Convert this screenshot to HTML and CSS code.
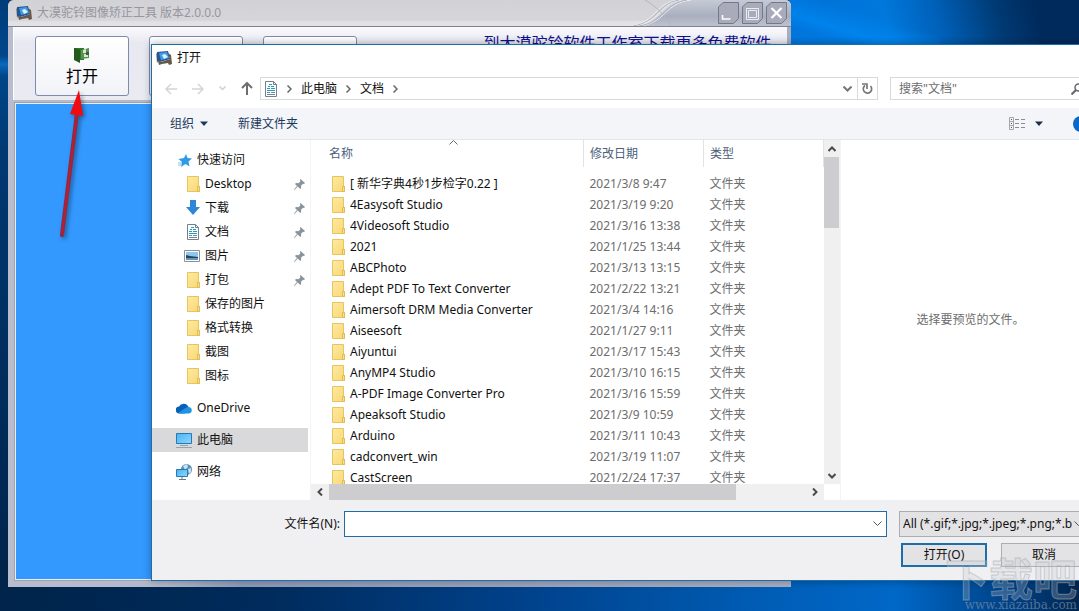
FILE: index.html
```html
<!DOCTYPE html>
<html lang="zh-CN">
<head>
<meta charset="utf-8">
<title>大漠驼铃图像矫正工具</title>
<link rel="stylesheet" href="styles.css">
</head>
<body>
<svg class="sprite" aria-hidden="true">
  <defs>
    <linearGradient id="gold" x1="0" y1="0" x2="1" y2="1"><stop offset="0" stop-color="#ffeaa0"/><stop offset="1" stop-color="#f8d775"/></linearGradient>
    <linearGradient id="screen" x1="0" y1="0" x2="1" y2="1"><stop offset="0" stop-color="#48b4f4"/><stop offset="1" stop-color="#8ed6ff"/></linearGradient>
    <symbol id="folder" viewBox="0 0 14 16"><path d="M1.500.5h11v10h1v5h-12z" fill="url(#gold)" stroke="#e6c561"/><path d="M11.500 15.500v-5h2v5z" fill="#fbe08a" stroke="#dfbb52"/></symbol>
    <symbol id="doc" viewBox="0 0 14 16"><path d="M1.500.5h8l3 3v12h-11z" fill="#fff" stroke="#73818b"/><path d="M9.500.5v3h3" fill="none" stroke="#73818b"/><path d="M5 3.500h3M4 5.500h2M7 5.500h3M3 7.500h3M7 7.500h4M3 9.500h8" stroke="#1f9cc0"/><path d="M3 11.500h3M7 11.500h4M3 13.500h8" stroke="#6f8996"/></symbol>
    <symbol id="app" viewBox="0 0 16 14"><path d="M0 3l2-2v10l-1 1z" fill="#7f8c9c"/><path d="M1 1l11-1 2 8-10 3-3-1z" fill="#27568c"/><path d="M3 2l8-1 2 6-8 2z" fill="#3f9ae8"/><path d="M6 4l3-1 3 3-4 2z" fill="#d9f2ff"/><path d="M2 10l3 1 9-3-2-6 3 2 1 9-3 1-1-2-6 1-3 1z" fill="#66594b"/></symbol>
    <symbol id="pin" viewBox="0 0 11 11"><path d="M6.500 0l4.500 4-1 1-1-.3-2 2 .2 2.300-1 1L3.700 7.500.5 11l-.5-.5 3-3.500L1 5l1-1 2.500.2 2-2L5.800 1z" fill="#8a939b"/></symbol>
  </defs>
</svg>
<main class="desktop">
  <section class="app-window">
    <header class="app-title">
      <svg class="app-icon" width="16" height="14"><use href="#app"/></svg>
      <h1 class="app-name">大漠驼铃图像矫正工具 版本2.0.0.0</h1>
      <svg class="swirl" width="170" height="27" viewBox="0 0 170 27" aria-hidden="true">
        <defs><linearGradient id="steel" x1="0" y1="0" x2="0" y2="1"><stop offset="0" stop-color="#c6cad5"/><stop offset=".6" stop-color="#a9afbf"/><stop offset="1" stop-color="#c0c4d0"/></linearGradient></defs>
        <path d="M5 27C32 22 32 4 54 0H170V27z" fill="url(#steel)"/>
        <path d="M4 26C30 22 28 4 50 0M0 26C25 22 24 4 46 0M11 26C37 20 34 3 60 0" fill="none" stroke="#eff0f4"/>
        <path d="M2 26C27 22 26 4 48 0M8 26C34 22 32 4 56 0" fill="none" stroke="#b2b6c2"/>
        <path d="M14 0C25 6 35 16 40 27" fill="none" stroke="#b2b6c4"/>
      </svg>
      <div class="app-controls">
        <button class="app-control" aria-label="最小化"><svg width="21" height="22" viewBox="0 0 21 22"><path d="M5 .5h15.500v16l-5 5H.5V5z" fill="#a9abba" stroke="#73788a"/><path d="M4.500 13v4h8" fill="none" stroke="#fff" stroke-width="1.500"/></svg></button>
        <button class="app-control" aria-label="最大化"><svg width="21" height="22" viewBox="0 0 21 22"><path d="M5 .5h15.500v16l-5 5H.5V5z" fill="#a9abba" stroke="#73788a"/><path d="M4.500 6.500h12v11h-12zM6.500 8.500h8v7h-8z" fill="none" stroke="#eceef5"/></svg></button>
        <button class="app-control" aria-label="关闭"><svg width="21" height="22" viewBox="0 0 21 22"><path d="M5 .5h15.500v16l-5 5H.5V5z" fill="#a9abba" stroke="#73788a"/><path d="M5.500 6l10 10M15.500 6l-10 10" stroke="#fff" stroke-width="2.200"/></svg></button>
      </div>
    </header>
    <div class="app-toolbar">
      <button class="tool">
        <svg width="16" height="16" viewBox="0 0 16 16" aria-hidden="true"><path d="M0 1h10v12H0z" fill="#2f7a24"/><path d="M0 1l6 2v13l-6-3z" fill="#215a1b"/><path d="M7 3l8-2v10l-8 1z" fill="#5d8f55"/><path d="M9 3l3-1v4H9zM10 7h4v3h-4z" fill="#d7e6d3"/><path d="M12 5h3v3h-3z" fill="#3b5c38"/></svg>
        打开
      </button>
      <button class="tool" aria-label="工具二"></button>
      <button class="tool" aria-label="工具三"></button>
      <a class="promo" href="#">到大漠驼铃软件工作室下载更多免费软件---</a>
    </div>
    <div class="canvas"></div>
  </section>

  <section class="dialog" role="dialog" aria-labelledby="dialog-title">
    <header class="dialog-title">
      <svg width="16" height="14"><use href="#app"/></svg>
      <h2 class="dialog-name" id="dialog-title">打开</h2>
    </header>
    <div class="address-row">
      <div class="history">
        <button class="flat" aria-label="后退"><svg width="12" height="12" viewBox="0 0 12 12"><path d="M12 6H1M6 1L1 6l5 5" fill="none" stroke="#d4d4d6" stroke-width="1.500"/></svg></button>
        <button class="flat" aria-label="前进"><svg width="12" height="12" viewBox="0 0 12 12"><path d="M0 6h11M6 1l5 5-5 5" fill="none" stroke="#d4d4d6" stroke-width="1.500"/></svg></button>
        <button class="flat" aria-label="最近"><svg width="7" height="5" viewBox="0 0 7 5"><path d="M.5.5l3 3 3-3" fill="none" stroke="#cfcfd2" stroke-width="1.500"/></svg></button>
        <button class="flat" aria-label="上移"><svg width="12" height="13" viewBox="0 0 12 13"><path d="M6 13V1M1 6l5-5 5 5" fill="none" stroke="#6e6e72" stroke-width="2"/></svg></button>
      </div>
      <nav class="address" aria-label="路径">
        <svg width="14" height="16"><use href="#doc"/></svg>
        <svg class="crumb-sep" width="5" height="8" viewBox="0 0 5 8"><path d="M.5.5L4 4 .5 7.500" fill="none" stroke="#666" stroke-width="1.500"/></svg>
        <a class="crumb" href="#">此电脑</a>
        <svg class="crumb-sep" width="5" height="8" viewBox="0 0 5 8"><path d="M.5.5L4 4 .5 7.500" fill="none" stroke="#666" stroke-width="1.500"/></svg>
        <a class="crumb" href="#">文档</a>
        <svg class="crumb-sep" width="5" height="8" viewBox="0 0 5 8"><path d="M.5.5L4 4 .5 7.500" fill="none" stroke="#666" stroke-width="1.500"/></svg>
        <button class="flat address-drop" aria-label="展开路径"><svg width="9" height="6" viewBox="0 0 9 6"><path d="M.5.5l4 4 4-4" fill="none" stroke="#77777b" stroke-width="2"/></svg></button>
        <button class="flat refresh" aria-label="刷新"><svg width="11" height="12" viewBox="0 0 11 12"><path d="M3 2.500A4.200 4.200 0 1 0 8.500 3" fill="none" stroke="#77777b" stroke-width="1.700"/><path d="M0 1h5v5" fill="none" stroke="#77777b" stroke-width="1.700"/></svg></button>
      </nav>
      <label class="search">
        <input class="search-input" type="text" placeholder="搜索&quot;文档&quot;" aria-label="搜索">
        <svg width="12" height="12" viewBox="0 0 12 12"><circle cx="7.500" cy="4.500" r="3.500" fill="none" stroke="#66666a" stroke-width="1.500"/><path d="M5 7L.5 11.500" stroke="#66666a" stroke-width="2"/></svg>
      </label>
    </div>
    <div class="commands">
      <button class="flat command">组织 <svg width="8" height="5" viewBox="0 0 8 5"><path d="M0 .5h8L4 5z" fill="#1e395b"/></svg></button>
      <button class="flat command">新建文件夹</button>
      <button class="flat view" aria-label="更改视图">
        <svg width="17" height="13" viewBox="0 0 17 13"><path d="M.5.500h4v12h-4zM.5 4.500h4M.5 8.500h4" fill="none" stroke="#a4a4a8"/><path d="M2 2.500h1M2 6.500h1M2 10.500h1" stroke="#555"/><path d="M6 2.500h4M12 2.500h4M6 6.500h4M12 6.500h4M6 10.500h4M12 10.500h4" stroke="#8c8c92"/></svg>
        <svg width="8" height="5" viewBox="0 0 8 5"><path d="M0 .5h8L4 5z" fill="#1e2f4b"/></svg>
      </button>
      <button class="flat help" aria-label="帮助"></button>
    </div>
    <div class="browser">
      <nav class="places">
        <ul class="place-group">
          <li class="place"><svg width="14" height="13" viewBox="0 0 14 13"><path d="M8 0l1.500 4 4.500.5-3.500 3 1 5L7.500 10 3 13l1-5-3.500-3L6 4z" fill="#2e9ce4"/><path d="M0 9h4M0 11h3" stroke="#7cc0ef"/></svg>快速访问</li>
          <li class="place child"><svg width="14" height="16"><use href="#folder"/></svg>Desktop<svg class="pin" width="11" height="11"><use href="#pin"/></svg></li>
          <li class="place child"><svg width="14" height="16" viewBox="0 0 14 16"><path d="M4 0h6v7h4l-7 8-7-8h4z" fill="#2f86d6"/></svg>下载<svg class="pin" width="11" height="11"><use href="#pin"/></svg></li>
          <li class="place child"><svg width="14" height="16"><use href="#doc"/></svg>文档<svg class="pin" width="11" height="11"><use href="#pin"/></svg></li>
          <li class="place child"><svg class="wide" width="16" height="12" viewBox="0 0 16 12"><path d="M.5.5h15v11H.5z" fill="#fff" stroke="#87919b"/><path d="M2 2h12v8H2z" fill="#8dc7ee"/><path d="M2 5l4 1 8 1v3H2z" fill="#23455f"/><path d="M2 8h12v2H2z" fill="#6696b2"/></svg>图片<svg class="pin" width="11" height="11"><use href="#pin"/></svg></li>
          <li class="place child"><svg width="14" height="16"><use href="#folder"/></svg>打包<svg class="pin" width="11" height="11"><use href="#pin"/></svg></li>
          <li class="place child"><svg width="14" height="16"><use href="#folder"/></svg>保存的图片</li>
          <li class="place child"><svg width="14" height="16"><use href="#folder"/></svg>格式转换</li>
          <li class="place child"><svg width="14" height="16"><use href="#folder"/></svg>截图</li>
          <li class="place child"><svg width="14" height="16"><use href="#folder"/></svg>图标</li>
        </ul>
        <ul class="place-group">
          <li class="place"><svg class="wide" width="16" height="11" viewBox="0 0 16 11"><path d="M3.500 10.500a3.500 3.500 0 0 1-.5-7A5.200 5.200 0 0 1 12.500 4L9 10.500z" fill="#0a5fb8"/><path d="M2 10L9.500 5a4 4 0 0 1 3.500-1 3.300 3.300 0 0 1 0 6.500H4z" fill="#1f93e6"/></svg>OneDrive</li>
        </ul>
        <ul class="place-group">
          <li class="place selected"><svg class="wide" width="16" height="15" viewBox="0 0 16 15"><path d="M.5.500h15v10H.5z" fill="url(#screen)" stroke="#2a78ae"/><path d="M4 12.500h8M0 14.500h16" stroke="#94a5b2"/></svg>此电脑</li>
        </ul>
        <ul class="place-group">
          <li class="place"><svg class="wide" width="16" height="16" viewBox="0 0 16 16"><circle cx="10.500" cy="5.500" r="5.500" fill="#5b8fb5"/><path d="M7 2l4-2 1 3-3 3zM12 5l3-1v4l-2 2z" fill="#c8e2f1"/><path d="M.5 5.500h11v7H.5z" fill="url(#screen)" stroke="#2a78ae"/><path d="M6 13v2M3 15.500h7" stroke="#657b8b"/></svg>网络</li>
        </ul>
      </nav>
      <div class="listing">
        <div class="list-main">
          <svg class="sort" width="9" height="5" viewBox="0 0 9 5" aria-hidden="true"><path d="M.5 4.500l4-4 4 4" fill="none" stroke="#6a6a6e"/></svg>
          <div class="list-view">
            <table class="files">
              <colgroup><col class="col-name"><col class="col-date"><col class="col-type"></colgroup>
              <thead><tr><th>名称</th><th>修改日期</th><th>类型</th></tr></thead>
              <tbody>
                <tr><td><svg width="14" height="16"><use href="#folder"/></svg>[ 新华字典4秒1步检字0.22 ]</td><td>2021/3/8 9:47</td><td>文件夹</td></tr>
                <tr><td><svg width="14" height="16"><use href="#folder"/></svg>4Easysoft Studio</td><td>2021/3/19 9:20</td><td>文件夹</td></tr>
                <tr><td><svg width="14" height="16"><use href="#folder"/></svg>4Videosoft Studio</td><td>2021/3/16 13:38</td><td>文件夹</td></tr>
                <tr><td><svg width="14" height="16"><use href="#folder"/></svg>2021</td><td>2021/1/25 13:44</td><td>文件夹</td></tr>
                <tr><td><svg width="14" height="16"><use href="#folder"/></svg>ABCPhoto</td><td>2021/3/13 13:15</td><td>文件夹</td></tr>
                <tr><td><svg width="14" height="16"><use href="#folder"/></svg>Adept PDF To Text Converter</td><td>2021/2/22 13:21</td><td>文件夹</td></tr>
                <tr><td><svg width="14" height="16"><use href="#folder"/></svg>Aimersoft DRM Media Converter</td><td>2021/3/4 14:16</td><td>文件夹</td></tr>
                <tr><td><svg width="14" height="16"><use href="#folder"/></svg>Aiseesoft</td><td>2021/1/27 9:11</td><td>文件夹</td></tr>
                <tr><td><svg width="14" height="16"><use href="#folder"/></svg>Aiyuntui</td><td>2021/3/17 15:43</td><td>文件夹</td></tr>
                <tr><td><svg width="14" height="16"><use href="#folder"/></svg>AnyMP4 Studio</td><td>2021/3/10 16:15</td><td>文件夹</td></tr>
                <tr><td><svg width="14" height="16"><use href="#folder"/></svg>A-PDF Image Converter Pro</td><td>2021/3/16 15:59</td><td>文件夹</td></tr>
                <tr><td><svg width="14" height="16"><use href="#folder"/></svg>Apeaksoft Studio</td><td>2021/3/9 10:59</td><td>文件夹</td></tr>
                <tr><td><svg width="14" height="16"><use href="#folder"/></svg>Arduino</td><td>2021/3/11 10:43</td><td>文件夹</td></tr>
                <tr><td><svg width="14" height="16"><use href="#folder"/></svg>cadconvert_win</td><td>2021/3/19 11:07</td><td>文件夹</td></tr>
                <tr><td><svg width="14" height="16"><use href="#folder"/></svg>CastScreen</td><td>2021/2/24 17:37</td><td>文件夹</td></tr>
              </tbody>
            </table>
          </div>
          <div class="hscroll">
            <button class="flat scroll-button" aria-label="向左"><svg width="6" height="8" viewBox="0 0 6 8"><path d="M5 .5L1.500 4 5 7.500" fill="none" stroke="#4b4b4f" stroke-width="2"/></svg></button>
            <div class="hthumb"></div>
            <button class="flat scroll-button" aria-label="向右"><svg width="6" height="8" viewBox="0 0 6 8"><path d="M1 .5L4.500 4 1 7.500" fill="none" stroke="#4b4b4f" stroke-width="2"/></svg></button>
          </div>
        </div>
        <div class="vscroll">
          <button class="flat scroll-button" aria-label="向上"><svg width="8" height="6" viewBox="0 0 8 6"><path d="M.5 5L4 1.500 7.500 5" fill="none" stroke="#4b4b4f" stroke-width="2"/></svg></button>
          <div class="vthumb"></div>
          <button class="flat scroll-button" aria-label="向下"><svg width="8" height="6" viewBox="0 0 8 6"><path d="M.5 1L4 4.500 7.500 1" fill="none" stroke="#4b4b4f" stroke-width="2"/></svg></button>
        </div>
      </div>
      <p class="preview">选择要预览的文件。</p>
    </div>
    <footer class="dialog-foot">
      <div class="foot-row">
        <label class="file-label" for="file-name">文件名(N):</label>
        <div class="combo">
          <input class="combo-input" id="file-name" type="text">
          <button class="flat combo-drop" aria-label="历史"><svg width="9" height="6" viewBox="0 0 9 6"><path d="M.5.5l4 4 4-4" fill="none" stroke="#555"/></svg></button>
        </div>
        <div class="filter">
          <select class="filter-select" aria-label="文件类型"><option>All (*.gif;*.jpg;*.jpeg;*.png;*.b</option></select>
          <svg class="filter-arrow" width="9" height="6" viewBox="0 0 9 6"><path d="M.5.5l4 4 4-4" fill="none" stroke="#555"/></svg>
        </div>
      </div>
      <div class="foot-row actions">
        <button class="action primary">打开(O)</button>
        <button class="action">取消</button>
      </div>
    </footer>
  </section>

  <svg class="pointer" width="40" height="154" viewBox="0 0 40 154" aria-hidden="true">
    <path d="M8 147L23 25" stroke="#8d2840" stroke-width="4" stroke-linecap="round"/>
    <path d="M8 147L23 25" stroke="#b32036" stroke-width="2"/>
    <path d="M25 2L29 28 16 26z" fill="#f00b10"/>
  </svg>
  <div class="watermark" aria-hidden="true">
    <span class="mark-name">下载吧</span>
    <span class="mark-url">www.xiazaiba.com</span>
  </div>
</main>
</body>
</html>
```
FILE: styles.css
```css
* { box-sizing: border-box; }
body {
  margin: 0;
  font: 12px/16px "Noto Sans", "Noto Sans CJK SC", sans-serif;
  color: #111;
}
.sprite { position: absolute; width: 0; height: 0; }
svg { flex: none; }
h1, h2, p, ul { margin: 0; padding: 0; font-size: 12px; font-weight: 400; list-style: none; }
button, input, select { font: inherit; color: inherit; border-radius: 0; margin: 0; }
.flat { display: flex; align-items: center; justify-content: center; padding: 0; border: 0; background: none; }

.desktop {
  position: relative;
  height: 100vh;
  overflow: hidden;
  background:
    linear-gradient(197deg, transparent 40%, #0090ff88 66%, #0084f044 80%) 790px 0 / 150px 44px no-repeat,
    linear-gradient(75deg, #0070d4, #0078dc 35%, #0060b8 52%, #003a74 72%, #002a5c 85%) 100% 0 / 290px 50px no-repeat,
    linear-gradient(#003c78, #00468c 56px, #0a68bc 64px, #004688 76px, #003870 160px, #00254d) 0 0 / 12px 560px no-repeat,
    linear-gradient(90deg, #00244a, #002b5c 25%, #00418a 48%, #005cb4 70%, #0068c8 83%, #003c7c 95%, #00264f);
}

.app-window {
  position: absolute;
  inset: 0 288px 24px 8px;
  display: flex;
  flex-direction: column;
  padding: 0 4px 5px 5px;
  background: linear-gradient(90deg, #b9bccd, #b4b8ca 20%, #8f9ab8 30%, #a8aec2);
  border-radius: 6px 6px 0 0;
}
.app-title {
  display: flex;
  align-items: center;
  height: 27px;
  margin: 0 -4px 0 -5px;
  padding: 0 4px 0 8px;
  background: linear-gradient(#d2d2d6, #d6d6da 20px, #e2e2e6 22px);
  border-bottom: 1px solid #7e828e;
  border-radius: 6px 6px 0 0;
  overflow: hidden;
}
.app-name { margin-left: 5px; color: #96969f; }
.swirl { margin-left: auto; margin-right: -83px; }
.app-controls { position: relative; display: flex; gap: 3px; }
.app-control { display: flex; padding: 0; border: 0; background: none; }
.app-toolbar {
  display: flex;
  align-items: flex-start;
  gap: 20px;
  height: 73px;
  padding: 9px 0 0 21px;
  background: linear-gradient(#fafafd, #e8e8f1 16px, #eaeaf3);
  border-left: 1px solid #fff;
  overflow: hidden;
}
.tool {
  display: flex;
  flex-direction: column;
  align-items: center;
  flex: none;
  gap: 3px;
  width: 94px;
  height: 60px;
  padding: 10px 0 0;
  font-size: 16px;
  line-height: 20px;
  color: #000;
  background: linear-gradient(#fff, #f2f3f8);
  border: 1px solid #7f8bab;
  border-radius: 3px;
}
.promo { margin-left: auto; font-size: 16px; line-height: 14px; color: #10108c; text-decoration: none; white-space: nowrap; }
.canvas {
  flex: 1;
  background: #3399ff;
  border: 1px solid #e9edf5;
  outline: 1px solid #9aa3ae;
  margin: 3px 1px 2px 2px;
}

.dialog {
  position: absolute;
  inset: 44px -22px 30px 151px;
  display: flex;
  flex-direction: column;
  background: #fff;
  border: 1px solid #1d6ea8;
  box-shadow: 0 0 8px #00000050;
}
.dialog-title { display: flex; align-items: center; gap: 5px; height: 26px; padding-left: 4px; }
.address-row { display: flex; align-items: center; gap: 12px; height: 37px; padding: 0 13px 2px 13px; }
.history { display: flex; align-items: center; gap: 15px; width: 83px; }
.history .flat { flex: none; }
.address { display: flex; align-items: center; flex: 1; gap: 9px; height: 23px; padding-left: 3px; border: 1px solid #d9d9d9; }
.crumb { color: #111; text-decoration: none; }
.address-drop { margin-left: auto; }
.refresh { width: 20px; height: 21px; margin-left: -4px; border-left: 1px solid #d9d9d9; }
.search { display: flex; align-items: center; width: 197px; height: 23px; padding: 0 3px 0 8px; border: 1px solid #d9d9d9; }
.search-input { flex: 1; min-width: 0; padding: 0; border: 0; outline: 0; background: none; }
.search-input::placeholder { color: #6d6d6d; }
.commands {
  display: flex;
  align-items: center;
  gap: 30px;
  height: 32px;
  padding: 0 11px 0 18px;
  color: #1e395b;
  background: #f3f5f9;
  border-bottom: 1px solid #e4e6ea;
}
.command { gap: 6px; }
.view { gap: 9px; margin-left: auto; }
.help { width: 16px; height: 16px; border-radius: 8px; background: #0b68c4; }

.browser { display: flex; flex: 1; min-height: 0; }
.places { display: flex; flex-direction: column; flex: none; gap: 8px; width: 159px; padding: 8px 2px 0 0; border-right: 1px solid #f4f4f4; }
.place { display: flex; align-items: center; gap: 5px; height: 24px; padding-left: 26px; }
.place:has(.wide) { padding-left: 24px; }
.child { padding: 0 3px 0 34px; }
.child:has(.wide) { padding-left: 32px; }
.selected { background: #d9d9db; }
.pin { margin-left: auto; }
.listing { display: flex; flex: 2; min-width: 0; }
.list-main { position: relative; display: flex; flex: 1; flex-direction: column; min-width: 0; }
.sort { position: absolute; left: 138px; top: 0; }
.list-view { flex: 1; min-height: 0; overflow: hidden; }
.files { width: 100%; table-layout: fixed; border-collapse: collapse; }
.col-date, .col-type { width: 120px; }
.files th { height: 27px; padding: 0 0 0 6px; text-align: left; font-weight: 400; color: #4c607a; border-right: 1px solid #e3e3e3; }
.files th:first-child { padding-left: 18px; }
.files tbody::before { content: ""; display: block; height: 6px; }
.files td { height: 21px; padding: 0 0 0 6px; color: #6d6d6d; white-space: nowrap; }
.files td:first-child { padding-left: 20px; color: #111; }
.files td svg { margin-right: 5px; vertical-align: -4px; }
.hscroll { display: flex; height: 16px; background: #f0f0f1; }
.hthumb { width: 407px; background: #cdcdcf; }
.hscroll .scroll-button:last-child { margin-left: auto; }
.scroll-button { width: 18px; height: 16px; }
.vscroll { display: flex; flex-direction: column; width: 16px; margin-bottom: 16px; background: #f0f0f1; }
.vscroll .scroll-button { width: 16px; height: 17px; }
.vthumb { height: 71px; margin-right: 1px; background: #cdcdcf; }
.vscroll .scroll-button:last-child { margin-top: auto; }
.preview { display: flex; flex: none; align-items: center; justify-content: center; width: 260px; color: #6d6d6d; border-left: 1px solid #f4f4f4; }

.dialog-foot { display: flex; flex-direction: column; gap: 6px; height: 80px; padding: 11px 13px 0 0; background: #f0eff1; }
.foot-row { display: flex; align-items: center; }
.file-label { width: 188px; text-align: right; }
.combo { display: flex; flex: 1; height: 26px; margin: 0 12px 0 4px; background: #fff; border: 1px solid #1d6ea8; }
.combo-input { flex: 1; min-width: 0; padding: 0 4px; border: 0; outline: 0; background: none; }
.combo-drop { width: 17px; }
.filter { position: relative; width: 188px; }
.filter-select { display: block; width: 100%; height: 26px; padding: 0 14px 0 3px; appearance: none; background: #e3e2e4; border: 1px solid #adadad; }
.filter-arrow { position: absolute; right: 4px; top: 10px; pointer-events: none; }
.actions { justify-content: flex-end; gap: 14px; }
.action { width: 86px; height: 24px; padding: 0; background: #e3e2e4; border: 1px solid #adadad; }
.primary { border: 2px solid #1d6ea8; }

.pointer { position: absolute; left: 54px; top: 88px; filter: drop-shadow(2px 2px 2px #0006); }
.watermark { position: absolute; right: 2px; bottom: 0; display: flex; flex-direction: column; align-items: flex-end; pointer-events: none; }
.mark-name { font: 700 44px/44px "Noto Sans CJK SC", sans-serif; color: #c4c8ce44; -webkit-text-stroke: 1px #a4abb588; }
.mark-url { font: 12px/12px "DejaVu Serif", serif; color: #8290a4aa; }
```
